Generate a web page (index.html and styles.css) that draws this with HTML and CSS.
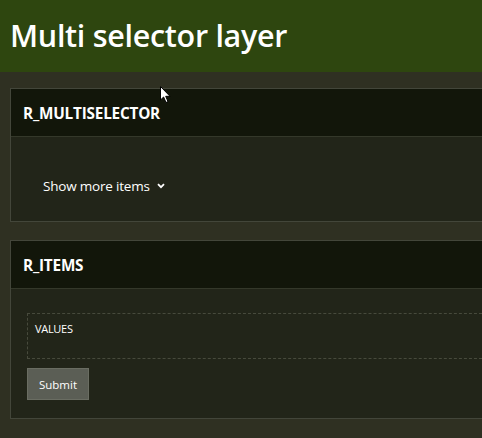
FILE: index.html
```html
<!DOCTYPE html>
<html>
<head>
<meta charset="utf-8">
<link rel="stylesheet" href="styles.css">
</head>
<body>
<header class="top">
  <h1 class="title">Multi selector layer</h1>
</header>
<main class="content">
  <section class="panel">
    <div class="panel-head">R_MULTISELECTOR</div>
    <div class="panel-body body-ms">
      <button class="more">Show more items
        <svg class="chev" width="8" height="6" viewBox="0 0 8 6"><path d="M1 1.2 L4 4.2 L7 1.2" fill="none" stroke="#ffffff" stroke-width="1.8"/></svg>
      </button>
    </div>
  </section>
  <section class="panel">
    <div class="panel-head">R_ITEMS</div>
    <div class="panel-body body-items">
      <div class="values">VALUES</div>
      <button class="submit">Submit</button>
    </div>
  </section>
</main>
<svg class="cursor" width="12" height="18" viewBox="0 0 12 18"><path d="M0.5 0.5 L0.5 14 L3.6 11 L6 16.5 L8 15.6 L5.7 10.3 L10 10.3 Z" fill="#ffffff" stroke="#000000" stroke-width="1"/></svg>
</body>
</html>
```
FILE: styles.css
```css
html, body {
  margin: 0;
  padding: 0;
  overflow: hidden;
}
body {
  position: relative;
  width: 482px;
  height: 438px;
  background: #2f3022;
  font-family: "Open Sans", "Noto Sans", sans-serif;
  color: #ffffff;
}
.top {
  height: 72px;
  background: #2e460f;
  display: flex;
  align-items: center;
  padding-left: 10px;
}
.title {
  margin: 0;
  font-size: 30.5px;
  font-weight: 600;
  letter-spacing: -0.3px;
  color: #ffffff;
  line-height: 1;
  padding-bottom: 2px;
}
.content {
  padding: 16px 0 0 10px;
  display: flex;
  flex-direction: column;
  gap: 18px;
}
.panel {
  border: 1px solid #43463a;
  border-right: none;
  background: #222519;
}
.panel-head {
  height: 47px;
  background: #12160a;
  border-bottom: 1px solid #34382a;
  display: flex;
  align-items: center;
  padding-left: 12px;
  font-size: 15.3px;
  font-weight: 700;
  letter-spacing: -0.2px;
}
.panel-body {
  box-sizing: border-box;
}
.body-ms {
  height: 84px;
  padding: 40px 0 0 32px;
}
.more {
  background: none;
  border: none;
  color: #ffffff;
  font-family: inherit;
  font-size: 13.5px;
  padding: 0;
  display: flex;
  align-items: center;
  gap: 7px;
  letter-spacing: -0.2px;
}
.chev {
  display: block;
}
.body-items {
  height: 129px;
  padding: 24px 0 0 16px;
  display: flex;
  flex-direction: column;
  gap: 9px;
}
.values {
  height: 46px;
  border: 1px dashed #474a3c;
  border-right: none;
  box-sizing: border-box;
  padding: 7px 0 0 7px;
  font-size: 11px;
  letter-spacing: -0.3px;
}
.submit {
  align-self: flex-start;
  width: 62px;
  height: 32px;
  background: #5b5e55;
  border: 1px solid #6a6d62;
  color: #ffffff;
  font-family: inherit;
  font-size: 11.5px;
  padding: 0;
}
.cursor {
  position: absolute;
  left: 160px;
  top: 86px;
}
```
